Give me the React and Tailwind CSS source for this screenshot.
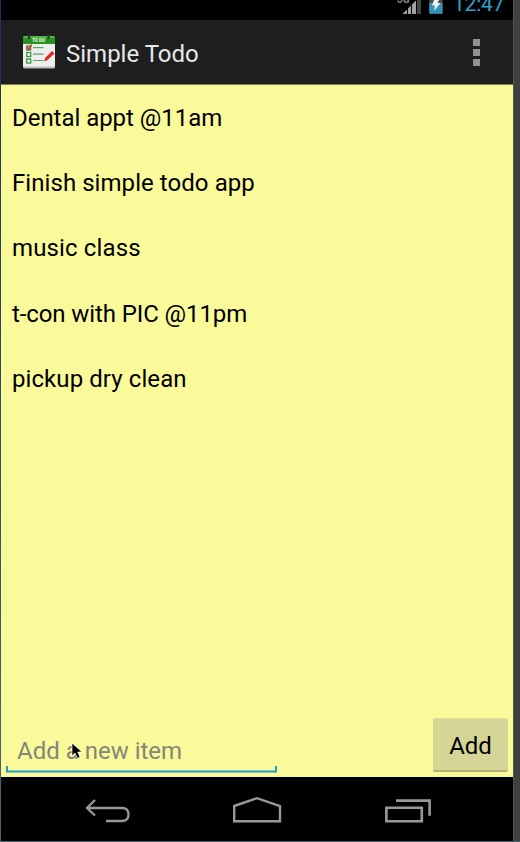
import React from "react";

const items = [
  { text: "Dental appt @11am", spacing: "tracking-[-0.04px]" },
  { text: "Finish simple todo app", spacing: "tracking-[0.06px]" },
  { text: "music class", spacing: "tracking-[0.13px]" },
  { text: "t-con with PIC @11pm", spacing: "tracking-[-0.1px]" },
  { text: "pickup dry clean", spacing: "tracking-[0.08px]" },
];

function StatusBar() {
  return (
    <div className="flex h-5 justify-end overflow-hidden bg-black pr-[9px]">
      <svg width="56" height="20" viewBox="0 0 56 20" className="mr-px shrink-0">
        <text x="1" y="2.5" fontSize="10" fontWeight="700" fill="#8a8a8a" fontFamily="Roboto, sans-serif">3G</text>
        <path d="M6.5 14L11 9.5V14Z M12 14V8.5L15 5.5V14Z M16 14V4.5L20 0.5V14Z" fill="#a2a2a2" />
        <path d="M21 0H25V14H21Z" fill="#444" />
        <path d="M33.3 0H46.5V14H33.3Z" fill="#505050" />
        <path d="M33.3 3H46.5V13.5H33.3Z" fill="#3093b8" />
        <path d="M38 0H43L41.5 3H44.5L38 11L39 5.5H36Z" fill="#f1f1f1" />
      </svg>
      <div className="-mt-[10px] h-[24px] w-[51px] text-[21px] leading-[28px] font-normal tracking-[-0.2px] whitespace-nowrap text-[#2da0cc]">12:47</div>
    </div>
  );
}

function TodoIcon() {
  return (
    <svg width="34" height="36" viewBox="0 0 34 36" className="shrink-0">
      <rect x="1" y="3" width="32" height="31.5" rx="1.5" fill="#bcbcbc" />
      <rect x="1" y="4" width="32" height="28.5" rx="1" fill="#eeeeee" />
      <path d="M1 10V4Q1 2 3 2H31Q33 2 33 4V10Z" fill="#28931d" />
      <path d="M1 4Q1 2 3 2H31Q33 2 33 4Z" fill="#55b445" />
      <path d="M7 0V5M26.5 0V5" stroke="#303030" strokeWidth="2.2" />
      <text x="10" y="8.4" textLength="13" lengthAdjust="spacingAndGlyphs" fontSize="5" fontWeight="900" fill="#e9f6e6" fontFamily="Roboto, sans-serif">TO DO</text>
      <g fill="#f5faf5" stroke="#3a9445" strokeWidth="1.3">
        <rect x="4.7" y="12" width="4" height="4" />
        <rect x="4.7" y="18.5" width="4" height="4" />
        <rect x="4.7" y="25" width="4" height="4" />
      </g>
      <path d="M11 13.7H21.5M11 20.2H21.5M11 26.5H21.5" stroke="#57a75d" strokeWidth="1.2" />
      <path d="M5 12.5L6.6 15.5L9.5 10.5" fill="none" stroke="#d92b2b" strokeWidth="1.5" />
      <path d="M30 17L32.5 19.5L25.5 26L22 27.5L23.5 23.5Z" fill="#dd2929" />
    </svg>
  );
}

function Header() {
  return (
    <header className="flex h-[65px] items-center border-b border-[#85835b] bg-[#1e1e1e] pr-[33px] pl-[21px]">
      <TodoIcon />
      <h1 className="ml-[10px] flex-1 pt-[4px] text-[24px] leading-8 font-normal text-[#e8e8e8]">Simple Todo</h1>
      <div className="flex flex-col gap-[3px]">
        <span className="size-[7px] bg-[#929292]" />
        <span className="size-[7px] bg-[#929292]" />
        <span className="size-[7px] bg-[#929292]" />
      </div>
    </header>
  );
}

function NavBar() {
  return (
    <nav className="flex h-16 items-start bg-black pt-[18px] pl-[84px]">
      <svg width="46" height="32" viewBox="0 0 46 32" fill="none" stroke="#999" strokeWidth="2.3">
        <path d="M10 5L2 13L10 20.5M2 13H37C41 13 43.5 15.5 43.5 19.5C43.5 23.5 41 26 37 26H21" />
      </svg>
      <svg width="50" height="32" viewBox="0 0 50 32" className="ml-[101px]" fill="none" stroke="#999" strokeWidth="2.4">
        <path d="M2.2 11L25 3.2L48 11V26.3H2.2Z" />
      </svg>
      <svg width="48" height="32" viewBox="0 0 48 32" className="ml-[102px]" fill="none" stroke="#999" strokeWidth="2.6">
        <path d="M2.4 12.8H37.8V26.3H2.4ZM12 5.6H45.6V20.8" />
      </svg>
    </nav>
  );
}

export default function App() {
  return (
    <div className="flex h-[842px] w-[520px] flex-col overflow-hidden bg-[#426373] font-[Roboto,sans-serif]">
      <div className="flex h-[841px]">
        <div className="w-px bg-linear-to-b from-[#1b3157] to-[#46677a]" />
        <main className="flex w-[512px] flex-col">
          <StatusBar />
          <Header />
          <section className="flex flex-1 flex-col bg-[#fafa9a]">
            <ul className="flex-1">
              {items.map((item) => (
                <li key={item.text} className={`flex h-[65.4px] items-center pl-[11px] text-[24px] leading-8 whitespace-nowrap text-black ${item.spacing}`}>
                  {item.text}
                </li>
              ))}
            </ul>
            <form className="flex h-[60px] items-start justify-between pr-[5px] pl-[5px]">
              <div className="relative mt-[14px] flex h-[41px] w-[271px] flex-col">
                <label className="pt-[4px] pl-[11px] text-[24px] leading-8 text-[#85857a]">Add a new item</label>
                <svg width="271" height="7" viewBox="0 0 271 7" className="absolute -bottom-px left-0" fill="none" stroke="#1b9fc5" strokeWidth="2">
                  <path d="M1 0V5.5H270V0" />
                </svg>
                <svg width="12" height="18" viewBox="0 0 12 18" className="absolute top-[11px] left-[65px]">
                  <path d="M1 1V14L4 11L6.4 16.3L9 15L6.7 10H11Z" fill="#000" stroke="#fff" strokeWidth="0.7" />
                </svg>
              </div>
              <button type="button" className="mt-px h-[54px] w-[75px] rounded-[2px] border-t border-b-2 border-t-[#dfdf9f] border-b-[#b2b27a] bg-[#d5d595] pt-[2px] text-[24px] leading-8 text-black">Add</button>
            </form>
          </section>
          <NavBar />
        </main>
        <div className="w-[7px] border-l border-[#55554a] bg-[#404040]" />
      </div>
    </div>
  );
}
